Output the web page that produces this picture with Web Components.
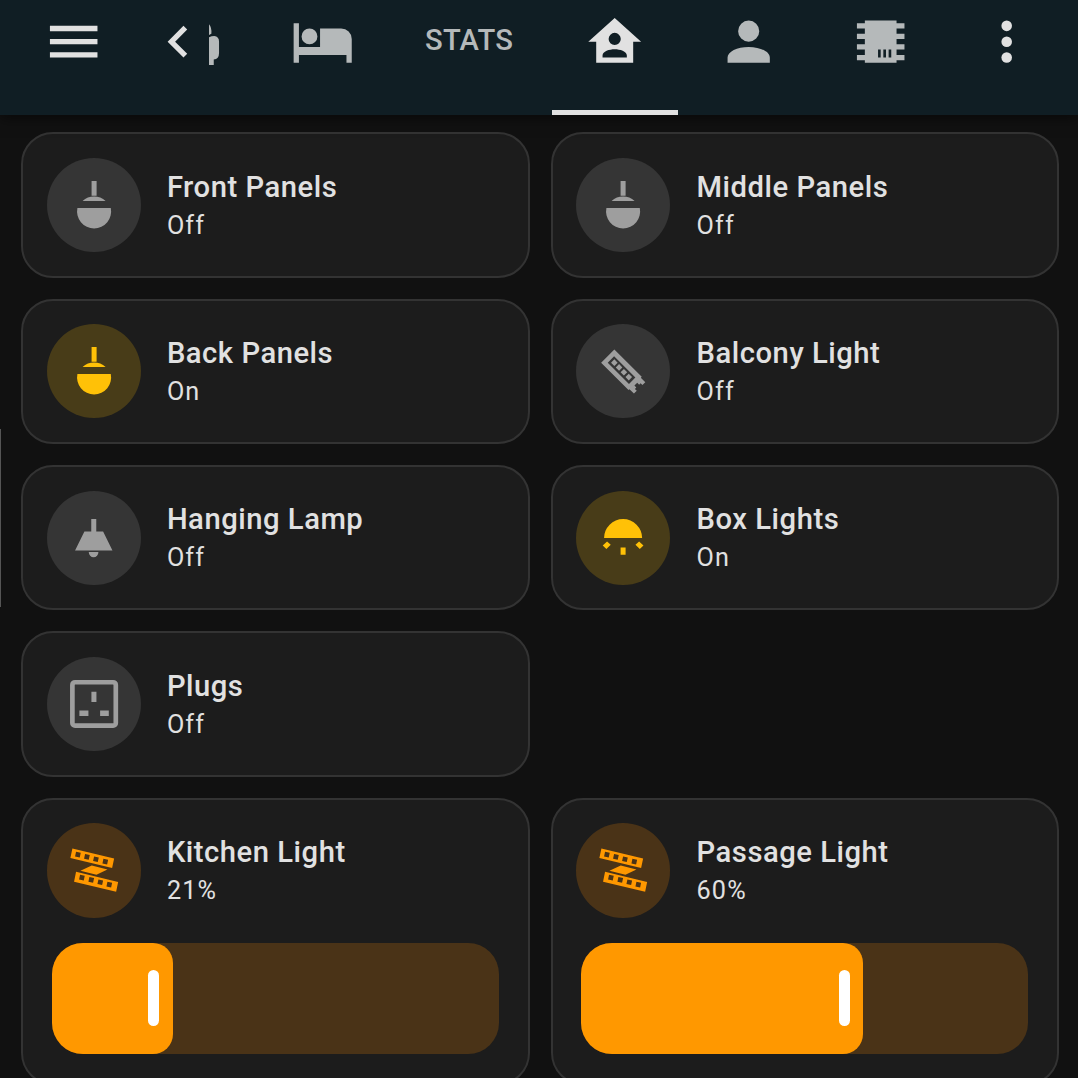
<!DOCTYPE html>
<html lang="en"><head><meta charset="utf-8"><title>Home</title>
<style>
html,body{margin:0;height:1078px;overflow:hidden;background:#111}
body{font-family:Roboto,"Liberation Sans",sans-serif;color:#e1e1e1}
</style></head><body>
<home-app></home-app>
<script>
const NAV={
 menu:'<path d="M3,6H21V8H3V6M3,11H21V13H3V11M3,16H21V18H3V16Z"/>',
 back:'<path d="M15.6,16.58L11.02,12L15.6,7.41L14.190,6L8.190,12L14.190,18L15.6,16.58Z"/>',
 partial:'<path d="M0,5.4Q1.1,6.6 .9,9L0,9.5ZM0,10.3Q1,9.8 2,9.8Q3.8,10 3.800,11.900V16.3Q3.800,18.700 1.8,18.700V20.8H0Z"/>',
 bed:'<path d="M19,7H11V14H3V5H1V20H3V17H21V20H23V11A4,4 0 0,0 19,7M7,13A3,3 0 0,0 10,10A3,3 0 0,0 7,7A3,3 0 0,0 4,10A3,3 0 0,0 7,13Z"/>',
 home:'<path fill-rule="evenodd" d="M12,3L2,12H5V20H19V12H22ZM12,8.65A2.3,2.3 0 0 1 12,13.25A2.3,2.3 0 0 1 12,8.65M7.4,18V17.2C7.4,15.6 10,14.85 12,14.85C14,14.85 16.6,15.6 16.6,17.2V18Z"/>',
 person:'<path d="M12,4A4,4 0 0,1 16,8A4,4 0 0,1 12,12A4,4 0 0,1 8,8A4,4 0 0,1 12,4M12,14C16.42,14 20,15.79 20,18V20H4V18C4,15.79 7.58,14 12,14Z"/>',
 chip:'<path fill-rule="evenodd" d="M6,4H18V5H21V7H18V9H21V11H18V13H21V15H18V17H21V19H18V20H6V19H3V17H6V15H3V13H6V11H3V9H6V7H3V5H6ZM11,15V18H12V15ZM13,15V18H14V15ZM15,15V18H16V15Z"/>',
 dots:'<circle cx="12" cy="6" r="2"/><circle cx="12" cy="12" r="2"/><circle cx="12" cy="18" r="2"/>'
};
/* Device glyphs share a 282-unit box centred on 0,0. */
const DEV={
 globe:'<path d="M-7.5,-72H7.5V-28H-7.5ZM-34.500,-12.500A51,51 0 0 1 34.500,-12.500ZM-50,9H50A51,51 0 1 1 -50,9Z"/>',
 strip:'<g transform="translate(-46,-45) rotate(45)"><path fill-rule="evenodd" d="M0,-28H116V-24H135V-12H127V-6H119V6H127V12H135V24H116V28H0ZM14,-13V14H104V-13Z"/><path d="M21,-7h14v14h-14zM41,-7h14v14h-14zM61.500,-7h14v14h-14zM82,-7h14v14h-14z"/></g>',
 lamp:'<path d="M-8.500,-57H6.500V-20H27L55,37H-57L-29,-20H-8.500ZM-16,42H13A14.500,15.500 0 0 1 -16,42Z"/>',
 box:'<path d="M-57,0A57,57 0 0 1 57,0ZM-7.500,28H7.500V50H-7.500ZM-61,22L-48,10L-37,20L-50,33ZM61,22L48,10L37,20L50,33Z"/>',
 socket:'<rect x="-65" y="-65.500" width="130" height="130" rx="8" fill="none" stroke="currentColor" stroke-width="14"/><path d="M-8,-37H7V-6H-8ZM-44,19H-17V36H-44ZM18,19H44V36H18Z"/>',
 led:'<path fill-rule="evenodd" d="M-65,-65L60,-35L54,-6L-71,-36ZM-54,-55L-57,-41L-43,-38L-40,-52ZM-27,-48L-30,-34L-16,-31L-13,-45ZM0,-41L-3,-27L11,-24L14,-38ZM28,-34L25,-20L39,-17L42,-31ZM-54,5L72,36L66,65L-60,35ZM-42,14L-45,28L-31,31L-28,17ZM-14,21L-17,35L-3,38L0,24ZM13,28L10,42L24,45L27,31ZM40,35L37,49L51,52L54,38ZM-41,2L-7,-14L40,-2L7,14Z"/>'
};
const def=(name,render)=>customElements.define(name,class extends HTMLElement{
 connectedCallback(){if(!this.shadowRoot)this.attachShadow({mode:'open'}).innerHTML=render(this)}
});
def('nav-icon',e=>`<style>:host{display:block;width:63.4px;height:63.4px;flex:none}svg{display:block;width:100%;height:100%;fill:currentColor}</style><svg viewBox="0 0 24 24">${NAV[e.getAttribute('name')]}</svg>`);
def('nav-tab',e=>`<style>
:host{display:flex;flex:none;box-sizing:border-box;justify-content:center;height:114.700px;padding-top:9.500px;color:#b5b9ba;font-size:29.2px;font-weight:500;line-height:60.500px;letter-spacing:.25px;overflow:hidden}
:host([bright]),:host([active]){color:#e1e1e1}
:host([active]){border-bottom:5px solid #e1e1e1}
:host([start]){justify-content:flex-start}
</style><slot></slot>`);
def('app-bar',()=>`<style>:host{display:flex;height:114.700px;background:#101e24;box-shadow:0 2px 14px rgba(0,0,0,.6);position:relative}</style><slot></slot>`);
def('device-icon',e=>`<style>
:host{display:block;flex:none;width:94.2px;height:94.2px;border-radius:50%;background:#353535;color:#9e9e9e}
:host([tone=amber]){background:#483c18;color:#ffc107}
:host([tone=orange]){background:#4a3317;color:#ff9800}
svg{display:block;width:100%;height:100%;fill:currentColor}
</style><svg viewBox="-141 -141 282 282">${DEV[e.getAttribute('name')]}</svg>`);
def('level-slider',e=>`<style>
:host{display:block;height:110.700px;margin:25.300px 5px 0 5px;border-radius:31px;background:#4a3317;overflow:hidden}
.fill{display:flex;box-sizing:border-box;align-items:center;justify-content:flex-end;padding-right:13.500px;height:100%;width:${e.getAttribute('fill')}px;background:#ff9800;border-radius:0 20px 20px 0}
i{display:block;width:11px;height:55.500px;border-radius:6px;background:#fff}
</style><div class="fill"><i></i></div>`);
def('device-card',e=>`<style>
:host{display:block;box-sizing:border-box;border:2px solid #333;border-radius:32px;background:#1c1c1c;padding:23.500px 24px 23.500px 23.500px;min-width:0}
.row{display:flex;align-items:center;gap:26.200px}
.name{padding-top:1px;font-size:29.200px;font-weight:500;line-height:40.400px;letter-spacing:.53px;white-space:nowrap}
.state{padding-top:.6px;font-size:25.200px;line-height:36.400px;letter-spacing:1.150px}
</style><div class="row"><device-icon name="${e.getAttribute('icon')}" tone="${e.getAttribute('tone')||''}"></device-icon><div><div class="name">${e.getAttribute('name')}</div><div class="state">${e.getAttribute('state')}</div></div></div><slot></slot>`);
def('home-app',()=>`<style>
:host{display:block;width:1078px;height:1078px;overflow:hidden;position:relative;background:#111}
main{display:grid;grid-template-columns:508.500px 508.500px;grid-template-rows:repeat(4,145.200px) 287px;gap:21.200px;padding:17.650px 0 0 21px}
.wide{grid-column:1}
.edge{position:absolute;left:0;top:429px;width:1px;height:178px;background:#555}
</style>
<app-bar>
<nav-tab bright style="width:146.4px"><nav-icon name="menu"></nav-icon></nav-tab>
<nav-tab bright start style="width:62.6px"><nav-icon name="back"></nav-icon></nav-tab>
<nav-tab start style="width:48px"><nav-icon name="partial"></nav-icon></nav-tab>
<nav-tab style="width:131.2px"><nav-icon name="bed"></nav-icon></nav-tab>
<nav-tab style="width:161.800px">STATS</nav-tab>
<nav-tab active style="width:126px;margin-left:1.700px"><nav-icon name="home"></nav-icon></nav-tab>
<nav-tab style="width:141.2px"><nav-icon name="person"></nav-icon></nav-tab>
<nav-tab style="width:123.600px"><nav-icon name="chip"></nav-icon></nav-tab>
<nav-tab bright style="width:128px"><nav-icon name="dots"></nav-icon></nav-tab>
</app-bar>
<main>
<device-card name="Front Panels" state="Off" icon="globe"></device-card>
<device-card name="Middle Panels" state="Off" icon="globe"></device-card>
<device-card name="Back Panels" state="On" icon="globe" tone="amber"></device-card>
<device-card name="Balcony Light" state="Off" icon="strip"></device-card>
<device-card name="Hanging Lamp" state="Off" icon="lamp"></device-card>
<device-card name="Box Lights" state="On" icon="box" tone="amber"></device-card>
<device-card name="Plugs" state="Off" icon="socket"></device-card>
<device-card class="wide" name="Kitchen Light" state="21%" icon="led" tone="orange"><level-slider fill="121"></level-slider></device-card>
<device-card name="Passage Light" state="60%" icon="led" tone="orange"><level-slider fill="282"></level-slider></device-card>
</main><div class="edge"></div>`);
</script></body></html>
